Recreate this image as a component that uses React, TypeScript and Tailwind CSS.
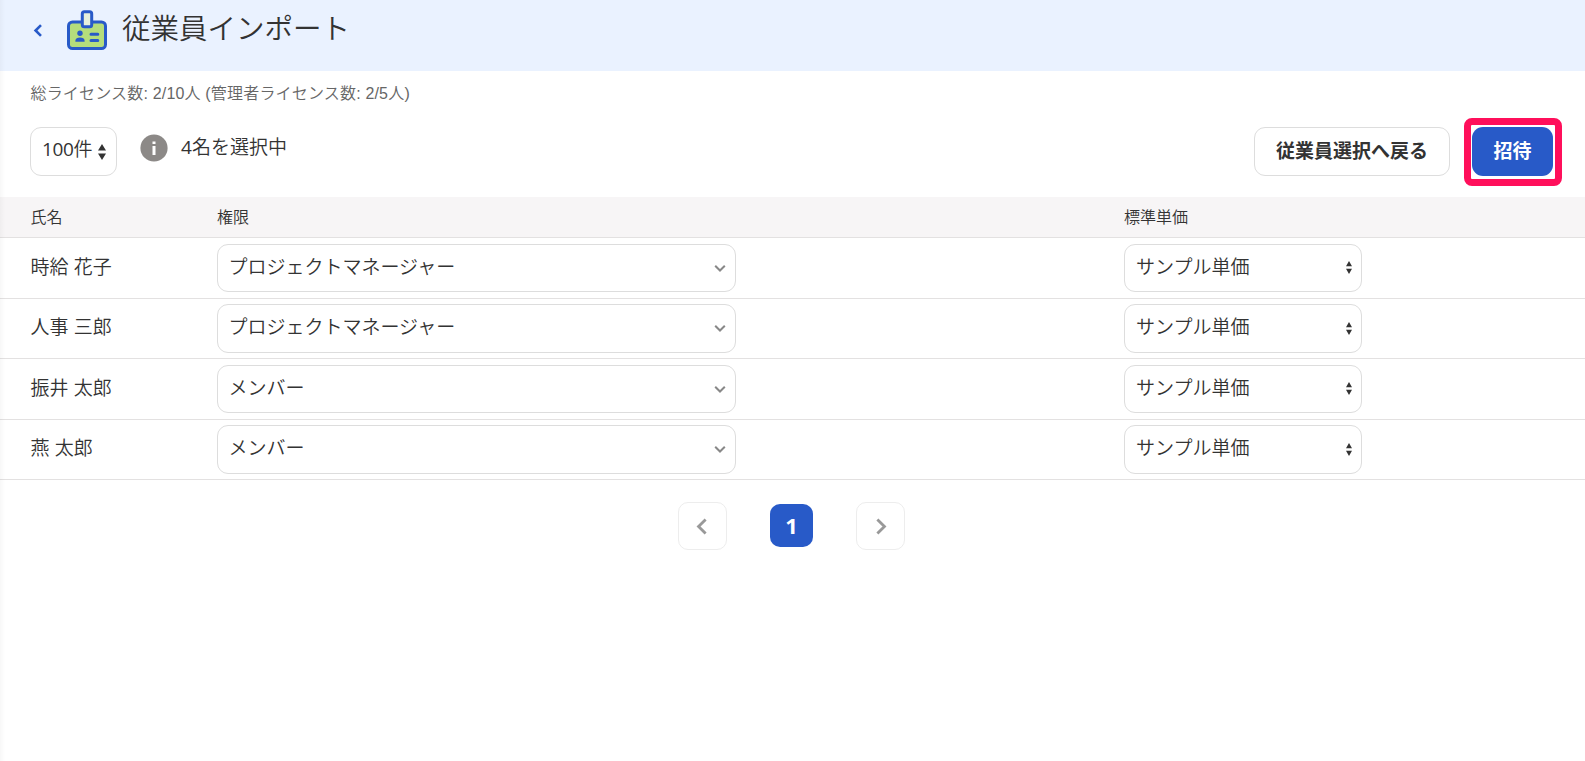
import React from "react";

type Employee = { name: string; role: string; price: string };

const employees: Employee[] = [
  { name: "時給 花子", role: "プロジェクトマネージャー", price: "サンプル単価" },
  { name: "人事 三郎", role: "プロジェクトマネージャー", price: "サンプル単価" },
  { name: "振井 太郎", role: "メンバー", price: "サンプル単価" },
  { name: "燕 太郎", role: "メンバー", price: "サンプル単価" },
];

function BadgeIcon() {
  return (
    <svg width="40" height="40" viewBox="0 0 40 40" className="shrink-0">
      <rect x="1.5" y="12" width="37" height="26.5" rx="4" fill="#b5dd7c" stroke="#285ac8" strokeWidth="3" />
      <rect x="15.3" y="1.7" width="9.4" height="15" rx="2" fill="#e6f0dc" stroke="#285ac8" strokeWidth="3" />
      <circle cx="13" cy="23.3" r="2.7" fill="#285ac8" />
      <path d="M8.4 31.8v-1.1c0-2 2-3.1 4.6-3.1s4.6 1.1 4.6 3.1v1.1z" fill="#285ac8" />
      <path d="M24 24.3h6.8M24 30.4h6.8" stroke="#285ac8" strokeWidth="3" strokeLinecap="round" />
    </svg>
  );
}

function Sorter({ className }: { className: string }) {
  return (
    <svg viewBox="0 0 8 16" preserveAspectRatio="none" className={className}>
      <path d="M4 0l4 6.5H0zM4 16l4-6.5H0z" fill="#333" />
    </svg>
  );
}

function Chevron({ d, className }: { d: string; className: string }) {
  return (
    <svg viewBox="0 0 12 12" fill="none" stroke="currentColor" className={className}>
      <path d={d} />
    </svg>
  );
}

export default function App() {
  return (
    <div className="relative h-[761px] w-full overflow-hidden bg-white font-['Liberation_Sans','Noto_Sans_CJK_JP',sans-serif] text-[19px] font-[350] text-[#333]">
      <div className="pointer-events-none absolute inset-y-0 left-0 w-[5px] bg-linear-to-r from-black/3 to-transparent" />
      <header className="flex h-[71px] items-start bg-[#eaf2ff]">
        <Chevron d="M8.3 1L3.3 6l5 5" className="mt-[24px] ml-[32px] size-[13px] shrink-0 stroke-[2.4] text-[#285ac8]" />
        <div className="mt-[10px] ml-[22px]">
          <BadgeIcon />
        </div>
        <h1 className="mt-[9px] ml-[15px] text-[28.5px] leading-[40px]">従業員インポート</h1>
      </header>

      <p className="h-[56px] pt-[11px] pl-[30.5px] text-[16px] leading-[24px] tracking-[0.18px] text-[#666]">
        総ライセンス数: 2/10人 (管理者ライセンス数: 2/5人)
      </p>

      <div className="flex h-[70px] items-start">
        <button className="ml-[30px] flex h-[49px] w-[87px] items-center rounded-[11px] border border-[#ddd] pl-[11px]">
          <span className="relative -top-[2px] w-[51px] text-left leading-[28px] whitespace-nowrap">
            <span className="font-['Open_Sans',sans-serif] font-normal tracking-[-0.4px]">100</span>件
          </span>
          <Sorter className="ml-[5px] h-[16px] w-[8px]" />
        </button>
        <svg width="28" height="28" viewBox="0 0 28 28" className="mt-[7px] ml-[23px]">
          <circle cx="14" cy="14" r="13.6" fill="#8c8987" />
          <path d="M12.5 7.5h3v2.5h-3zM12.5 12h3v9h-3z" fill="#fff" />
        </svg>
        <span className="mt-[6px] ml-[13px] leading-[28px]">
          <span className="font-['Open_Sans',sans-serif] font-normal">4</span>名を選択中
        </span>
        <button className="ml-auto h-[49px] w-[196px] rounded-[11px] border border-[#ddd] pt-[2px] font-bold">従業員選択へ戻る</button>
        <div className="-mt-[9px] mr-[23px] ml-[14px] h-[68px] w-[98px] rounded-[8px] border-7 border-[#ff0f5b] pt-[2px] pl-px">
          <button className="h-[49px] w-[81px] rounded-[11px] bg-[#285ac8] pt-[2px] font-bold text-white">招待</button>
        </div>
      </div>

      <div className="grid h-[41px] grid-cols-[217px_907px_1fr] items-center border-b border-[#e3e1e1] bg-[#f7f5f6] text-[16px]">
        <span className="pt-px pl-[30.5px]">氏名</span>
        <span className="pt-px">権限</span>
        <span className="pt-px">標準単価</span>
      </div>
      {employees.map((e) => (
        <div key={e.name} className="grid h-[60.5px] grid-cols-[217px_907px_1fr] items-center border-b border-[#e3e1e1]">
          <span className="pl-[30.5px]">{e.name}</span>
          <button className="flex h-[48.5px] w-[519px] items-center justify-between rounded-[11px] border border-[#ddd] pr-[9px] pl-[10.5px]">
            <span>{e.role}</span>
            <Chevron d="M1.2 3.7L6 8.5l4.8-4.8" className="size-[12px] stroke-2 text-[#888]" />
          </button>
          <button className="flex h-[48.5px] w-[238px] items-center justify-between rounded-[11px] border border-[#ddd] pr-[9px] pl-[11px]">
            <span>{e.price}</span>
            <Sorter className="h-[13px] w-[6px]" />
          </button>
        </div>
      ))}

      <nav className="mt-[22px] ml-[678px] flex items-start">
        <button className="flex h-[48px] w-[49px] items-center justify-center rounded-[10px] border border-[#ededed]">
          <Chevron d="M8.2 1L3.2 6l5 5" className="size-[17px] stroke-2 text-[#999]" />
        </button>
        <button className="mt-[2px] ml-[43px] size-[43px] rounded-[10px] bg-[#285ac8] pb-[2px] font-['Open_Sans',sans-serif] text-[22px] leading-[34px] font-bold text-white">1</button>
        <button className="ml-[43px] flex h-[48px] w-[49px] items-center justify-center rounded-[10px] border border-[#ededed]">
          <Chevron d="M3.8 1l5 5-5 5" className="size-[17px] stroke-2 text-[#999]" />
        </button>
      </nav>
    </div>
  );
}
